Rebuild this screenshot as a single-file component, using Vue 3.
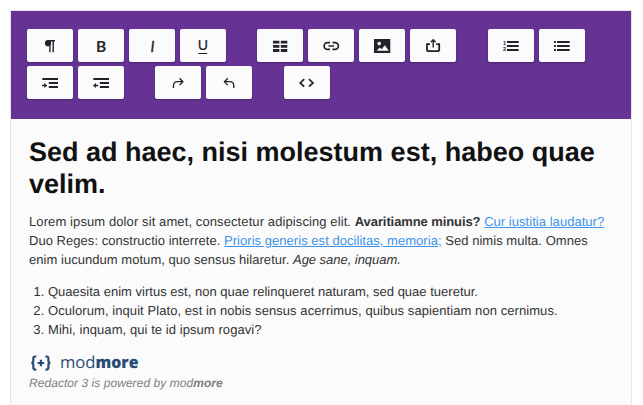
<script setup>
const rows = [
  [['paragraph', 'bold', 'italic', 'underline'], ['table', 'link', 'image', 'share'], ['ordered', 'unordered']],
  [['indent', 'outdent'], ['redo', 'undo'], ['code']]
]
</script>

<template>
  <main class="editor">
    <div class="toolbar">
      <div v-for="(row, r) in rows" :key="r" class="row">
        <div v-for="(group, g) in row" :key="g" class="group">
          <button v-for="name in group" :key="name" type="button" :aria-label="name">
            <svg width="46" height="33" viewBox="0 0 46 33" fill="none" stroke="#232227">
              <g v-if="name === 'paragraph'">
                <circle class="solid" cx="21" cy="14.2" r="3.1" />
                <path stroke-width="1.4" d="M21 11.7h7M22.9 11.2v12M26.2 11.2v12" />
              </g>
              <text v-else-if="name === 'bold'" class="glyph strong" x="23" y="23" text-anchor="middle">B</text>
              <text v-else-if="name === 'italic'" class="glyph slanted" x="23.4" y="22.8" text-anchor="middle">I</text>
              <g v-else-if="name === 'underline'">
                <text class="glyph under" x="22.9" y="21.4" text-anchor="middle">U</text>
                <path d="M18.3 24.5h9" />
              </g>
              <path v-else-if="name === 'table'" class="solid" d="M16 11.8h6.4v2.8H16zM23.8 11.8h6.5v2.8h-6.5zM16 15.9h6.4v2.8H16zM23.8 15.9h6.5v2.8h-6.5zM16 20.1h6.4v2.8H16zM23.8 20.1h6.5v2.8h-6.5z" />
              <path v-else-if="name === 'link'" stroke-width="1.7" d="M22 13.6h-2.5a3.4 3.4 0 0 0 0 6.8H22M24.5 13.6H27a3.4 3.4 0 0 1 0 6.8h-2.5M20.5 17h5.5" />
              <g v-else-if="name === 'image'">
                <path class="solid" d="M15 10h16.3v14H15z" />
                <circle class="light" cx="20.2" cy="14.6" r="1.8" />
                <path class="light" d="M17.7 21.7l3-3.2 2 1.7 3.1-4 4 5.5z" />
              </g>
              <g v-else-if="name === 'share'" stroke-width="1.8">
                <path d="M20 15.2h-3v5.3q0 1.7 1.7 1.7h8.8q1.7 0 1.7-1.7v-5.3h-3" />
                <path stroke-width="1.4" d="M23.2 18.5v-7M20.8 13.2l2.4-2.4 2.4 2.4" />
              </g>
              <g v-else-if="name === 'ordered'">
                <path class="solid" d="M18.9 12h11.8v1.9H18.9zM18.9 16h11.8v1.9H18.9zM18.9 20h11.8v1.9H18.9z" />
                <text class="digit" x="15" y="16.4">1</text>
                <text class="digit" x="15" y="22.4">2</text>
              </g>
              <path v-else-if="name === 'unordered'" class="solid" d="M18 12h12.7v1.9H18zM18 16h12.7v1.9H18zM18 20h12.7v1.9H18zM15 12h1.9v1.9H15zM15 16h1.9v1.9H15zM15 20h1.9v1.9H15z" />
              <g v-else-if="name === 'indent' || name === 'outdent'">
                <path class="solid" d="M15.3 12H31v1.9H15.3zM21.8 16H31v1.9h-9.2zM21.8 20H31v1.9h-9.2z" />
                <path v-if="name === 'indent'" class="solid" d="M15 18.8h2.3v-1.9l2.9 2.6-2.9 2.6v-1.9H15z" />
                <path v-else class="solid" d="M20.2 18.8h-2.3v-1.9L15 19.5l2.9 2.6v-1.9h2.3z" />
              </g>
              <path v-else-if="name === 'redo'" stroke-width="1.3" d="M18.5 22v-2.2q0-4.1 4.1-4.1h5M24.5 12.3l3.4 3.4-3.4 3.4" />
              <path v-else-if="name === 'undo'" stroke-width="1.3" d="M27.8 22v-2.2q0-4.1-4.1-4.1h-5M21.8 12.3l-3.4 3.4 3.4 3.4" />
              <path v-else stroke-width="1.7" d="M20.2 13.2l-4 3.7 4 3.7M25 13.2l4 3.7-4 3.7" />
            </svg>
          </button>
        </div>
      </div>
    </div>
    <article class="content">
      <h1>Sed ad haec, nisi molestum est, habeo quae velim.</h1>
      <p class="copy">
        <span class="open">Lorem ipsum dolor sit amet, consectetur adipiscing elit. </span><strong>Avaritiamne minuis?</strong> <a>Cur iustitia laudatur?</a><br>
        Duo Reges: constructio interrete. <a>Prioris generis est docilitas, memoria;</a> Sed nimis multa. Omnes<br>
        enim iucundum motum, quo sensus hilaretur. <em>Age sane, inquam.</em>
      </p>
      <ol>
        <li>Quaesita enim virtus est, non quae relinqueret naturam, sed quae tueretur.</li>
        <li class="loose">Oculorum, inquit Plato, est in nobis sensus acerrimus, quibus sapientiam non cernimus.</li>
        <li class="loose">Mihi, inquam, qui te id ipsum rogavi?</li>
      </ol>
      <svg class="logo" width="120" height="30" viewBox="0 -4 120 30">
        <g fill="none" stroke="#294c74" stroke-width="2.2">
          <path d="M7.3 4.5H6.2Q4.3 4.5 4.3 6.5v2.3q0 2-2 2 2 0 2 2v2.8q0 2 1.9 2h1.1M16.4 4.5h1.1q1.9 0 1.9 2v2.3q0 2 2 2-2 0-2 2v2.8q0 2-1.9 2h-1.1M8.6 11h6.6M11.9 7.7v6.6" />
        </g>
        <text class="brand" x="31" y="16" textLength="35.5" lengthAdjust="spacingAndGlyphs">mod</text>
        <text class="brand heavy" x="66.5" y="16" textLength="43" lengthAdjust="spacingAndGlyphs">more</text>
      </svg>
      <p class="credit">Redactor 3 is powered by mod<b>more</b></p>
    </article>
  </main>
</template>

<style>
body { background: #fff; }
</style>
<style scoped>
.editor {
  box-sizing: border-box;
  width: 622px;
  height: 395px;
  margin: 10px 0 0 10px;
  border: 1px solid #e5e4e7;
  border-bottom: 0;
  background: #fbfbfb;
  font-family: "Liberation Sans", Arial, sans-serif;
  text-rendering: geometricPrecision;
  overflow: hidden;
}
.toolbar {
  box-sizing: border-box;
  height: 108px;
  padding: 18px 16px;
  display: flex;
  flex-direction: column;
  gap: 4px;
  background: #663394;
}
.row { display: flex; gap: 31px; }
.group { display: flex; gap: 5px; }
.group:nth-child(3) { margin-left: 1px; }
button {
  width: 46px;
  height: 33px;
  padding: 0;
  border: 0;
  border-radius: 2px;
  background: #fbfafc;
  box-shadow: 0 1px 2px rgba(0, 0, 0, .3);
}
button svg { display: block; }
.solid { fill: #232227; stroke: none; }
.light { fill: #fbfafc; stroke: none; }
.glyph { font: 15px Lato, sans-serif; fill: #232227; stroke: none; }
.strong { font-size: 15.5px; font-weight: bold; }
.slanted { font-style: italic; stroke: #232227; stroke-width: .3; }
.under { font-size: 14px; stroke: #232227; stroke-width: .2; }
.digit { font: bold 5.5px "Liberation Sans", sans-serif; fill: #232227; stroke: none; }
.content { padding: 17px 18px 0; color: #333; font-size: 13px; line-height: 19px; }
h1 { margin: 0 0 12px; color: #111; font-size: 27px; line-height: 32px; font-weight: bold; }
.copy { margin: 0; white-space: nowrap; letter-spacing: .04px; }
.open { letter-spacing: .1px; }
strong { letter-spacing: -.09px; }
em { letter-spacing: -.04px; }
a { color: #3d93ea; text-decoration: underline; }
ol { margin: 13px 0 0; padding: 0 0 0 19px; white-space: nowrap; letter-spacing: .01px; }
.loose { letter-spacing: .07px; }
.logo { display: block; margin: 9px 0 -4px; }
.brand { font: 16.5px "Open Sans", sans-serif; fill: #294c74; }
.heavy { font-weight: 800; }
.credit { margin: 0; color: #808080; font-size: 12px; font-style: italic; line-height: 18px; letter-spacing: .05px; }
</style>
